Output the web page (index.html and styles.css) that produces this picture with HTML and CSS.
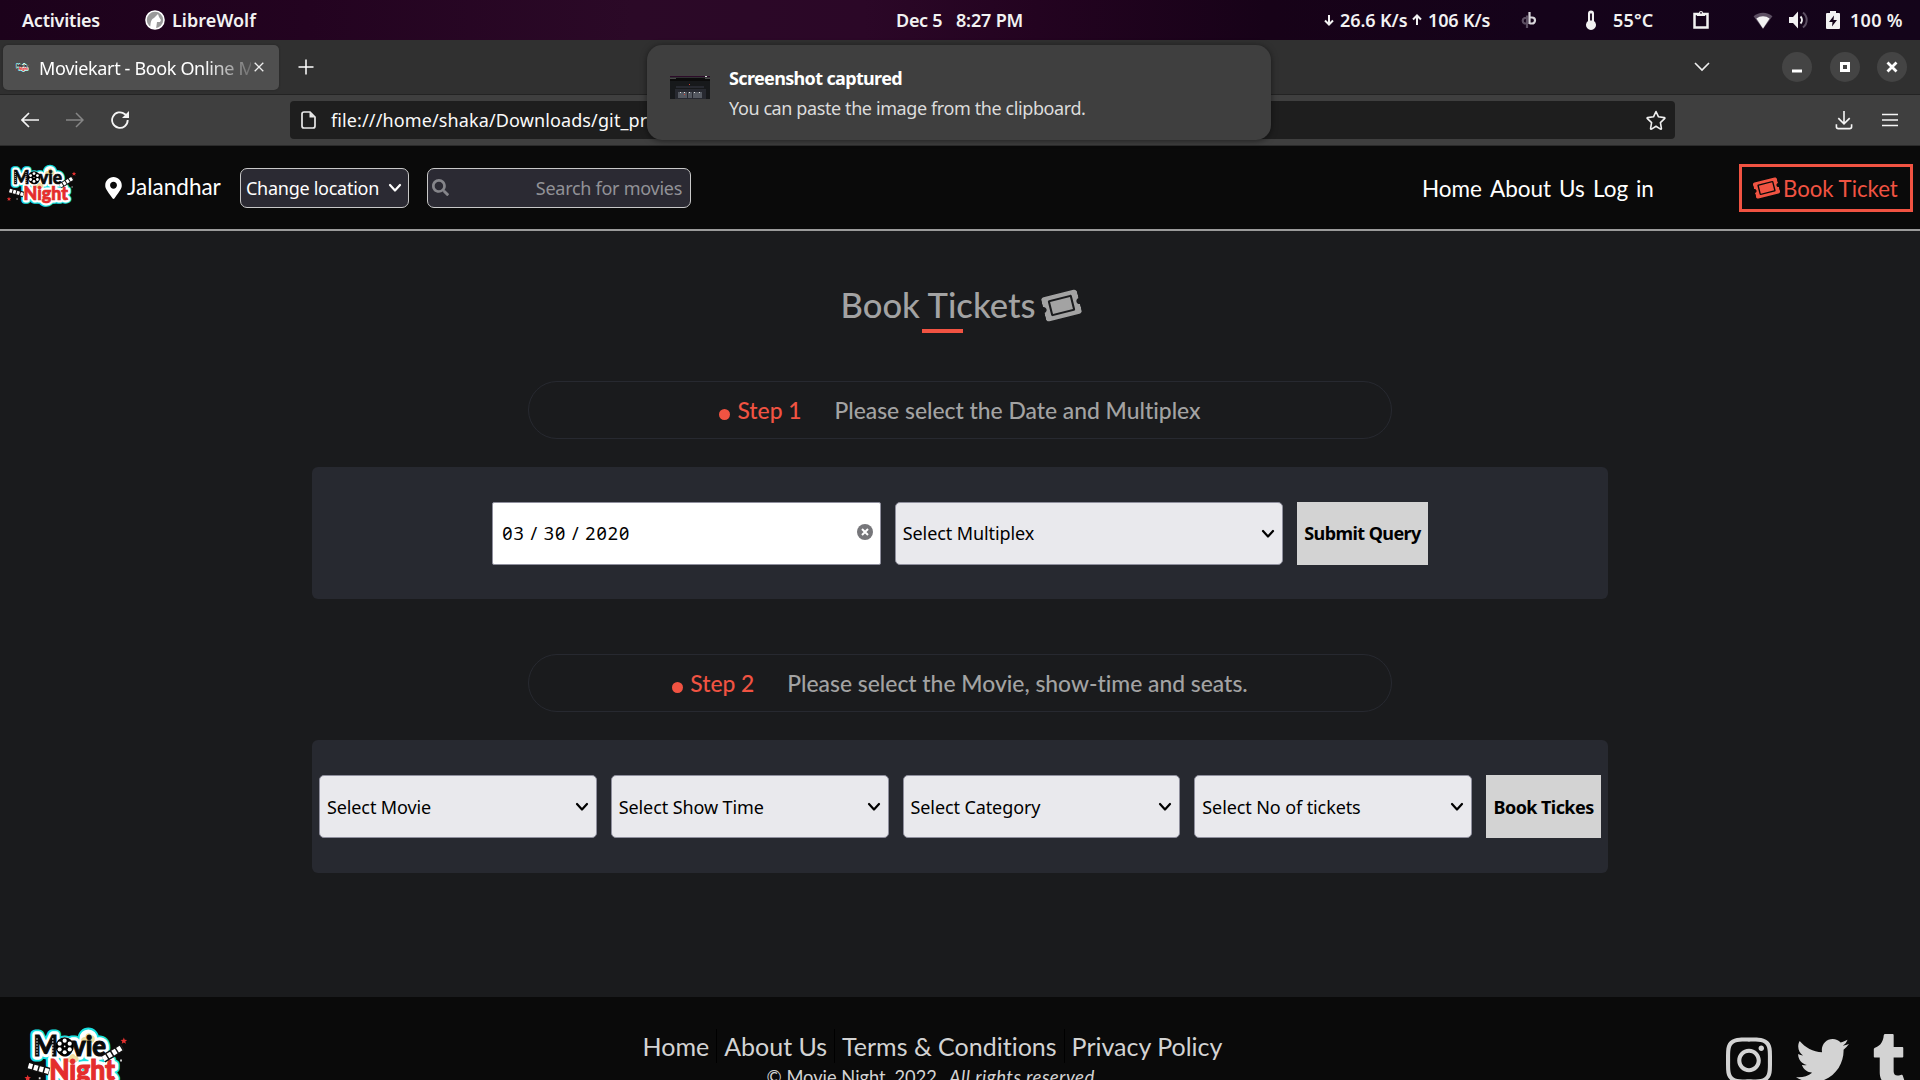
FILE: index.html
```html
<!DOCTYPE html>
<html lang="en">
<head>
<meta charset="utf-8">
<title>Moviekart - Book Online Movie Tickets</title>
<link rel="stylesheet" href="styles.css">
</head>
<body>
<svg class="defs" width="0" height="0">
  <symbol id="ticket" viewBox="0 0 576 512"><path d="M128 160h320v192H128V160zm400 96c0 26.51 21.49 48 48 48v96c0 26.51-21.49 48-48 48H48c-26.51 0-48-21.49-48-48v-96c26.51 0 48-21.49 48-48s-21.49-48-48-48v-96c0-26.51 21.49-48 48-48h480c26.51 0 48 21.49 48 48v96c-26.51 0-48 21.49-48 48zm-48-104c0-13.255-10.745-24-24-24H120c-13.255 0-24 10.745-24 24v208c0 13.255 10.745 24 24 24h336c13.255 0 24-10.745 24-24V152z"/></symbol>
  <symbol id="chevron" viewBox="0 0 14 10"><path d="M2 2l5 5.5L12 2" fill="none" stroke="currentColor" stroke-width="2.2" stroke-linecap="round" stroke-linejoin="round"/></symbol>
  <symbol id="logo" viewBox="6 162 72 48">
    <g class="logo-halo">
      <text x="13" y="182.7" textLength="49" lengthAdjust="spacingAndGlyphs">Movie</text>
      <text x="23.5" y="199" textLength="44.5" lengthAdjust="spacingAndGlyphs">Night</text>
      <circle cx="50" cy="171" r="3.5"/>
    </g>
    <g class="logo-edge">
      <text x="13" y="182.7" textLength="49" lengthAdjust="spacingAndGlyphs">Movie</text>
      <text x="23.5" y="199" textLength="44.5" lengthAdjust="spacingAndGlyphs">Night</text>
      <circle cx="50" cy="171" r="3.5"/>
    </g>
    <path d="M46 174c-2-2 0-4 2-4 0-3 4-3 4-1 3 0 3 4 1 5z" fill="#f0dda0"/>
    <path d="M35 187c-1-2 1-3 2-3 1-3 4-3 4-1 3 0 3 3 1 4z" fill="#f0dda0"/>
    <g class="logo-word">
      <text x="13" y="182.7" textLength="49" lengthAdjust="spacingAndGlyphs">Movie</text>
      <text class="logo-red" x="23.5" y="199" textLength="44.5" lengthAdjust="spacingAndGlyphs">Night</text>
    </g>
    <path d="M15.3 171v11M26 171v11" stroke="#fff" stroke-width=".7" stroke-dasharray="1 1"/>
    <circle cx="34" cy="176.5" r="6.2"/>
    <g fill="#fff"><circle cx="34" cy="172.6" r="1.4"/><circle cx="37.4" cy="174.6" r="1.4"/><circle cx="37.4" cy="178.5" r="1.4"/><circle cx="34" cy="180.4" r="1.4"/><circle cx="30.6" cy="178.5" r="1.4"/><circle cx="30.6" cy="174.6" r="1.4"/><circle cx="34" cy="176.5" r=".6"/></g>
    <path d="M60 185l13-8M9.500 189.500l14 4" stroke="#111" stroke-width="5.500"/>
    <path d="M60 185l13-8M9.500 189.500l14 4" stroke="#fff" stroke-width="3.600" stroke-dasharray="2.800 1"/>
    <path d="M74 170.500l.6 1.500 1.600.1-1.200 1 .4 1.600-1.400-.9-1.400.9.400-1.600-1.200-1 1.600-.1zM9 195.700l.6 1.500 1.600.1-1.200 1 .4 1.600-1.400-.9-1.400.9.400-1.600-1.200-1 1.600-.1z" fill="#e5302f"/>
    <path d="M16.500 198h1.200M71.500 186h1.200" stroke="#ddd" stroke-width="1.200"/>
  </symbol>
</svg>

<div class="topbar">
  <span class="activities">Activities</span>
  <svg class="wolf" viewBox="0 0 20 20"><circle cx="10" cy="10" r="9" fill="#999" stroke="#fff" stroke-width="1.600"/><path d="M5 18c1-4 0-8 4-10l4-4 1 3 2 3-1 2-3 0-1 7z" fill="#fff"/></svg>
  <span class="app">LibreWolf</span>
  <span class="date">Dec 5</span><span class="time">8:27 PM</span>
  <svg class="arr arr-down" viewBox="0 0 10 14"><path d="M5 2v9.500M1 7.500l4 4 4-4" fill="none" stroke="#f2f2f2" stroke-width="2"/></svg>
  <span class="down">26.6 K/s</span>
  <svg class="arr arr-up" viewBox="0 0 10 14"><path d="M5 12V3M1 6.500l4-4 4 4" fill="none" stroke="#f2f2f2" stroke-width="2"/></svg>
  <span class="up">106 K/s</span>
  <svg class="qb" viewBox="0 0 17 18"><g fill="none" stroke-width="2.200"><path d="M7 4.500v12.500M7 7H4.500a3 3 0 0 0 0 5.500H7" stroke="#5c4f62"/><path d="M9.500 1v12M9.500 6.500h2.500a3 3 0 0 1 0 6H9.500" stroke="#d8d5da"/></g></svg>
  <svg class="thermo" viewBox="0 0 12 20"><path d="M3 3.500a3 3 0 0 1 6 0V11a5 5 0 1 1-6 0z" fill="#f2f2f2"/><path d="M6 3.500v7" stroke="#14041a" stroke-width="1.800"/></svg>
  <span class="temp">55°C</span>
  <svg class="clip" viewBox="0 0 16 20"><path d="M1.500 4h13v13.500h-13z" fill="none" stroke="#f2f2f2" stroke-width="2.500"/><path d="M4 6V3h2a2 2 0 0 1 4 0h2v3z" fill="#f2f2f2"/><circle cx="8" cy="2.800" r=".9" fill="#14041a"/></svg>
  <svg class="wifi" viewBox="0 0 20 18"><path d="M0 4.500a15 15 0 0 1 20 0L10 18z" fill="#5c4f62"/><path d="M3 7a11 11 0 0 1 14 0L10 17.500z" fill="#f2f2f2"/></svg>
  <svg class="sound" viewBox="0 0 20 18"><path d="M0 6h4l5-5.500v17L4 12H0z" fill="#f2f2f2"/><path d="M11.500 5.500a5 5 0 0 1 0 7" fill="none" stroke="#f2f2f2" stroke-width="2"/><path d="M14 1.500a9.500 9.500 0 0 1 0 15" fill="none" stroke="#5c4f62" stroke-width="2"/></svg>
  <svg class="battery" viewBox="0 0 14 18"><path d="M1 2h3V0h6v2h3q1 0 1 1v14q0 1-1 1H1q-1 0-1-1V3q0-1 1-1z" fill="#f2f2f2"/><path d="M8 4.500L3 11h3.500L6 15.500 11 9H7.500z" fill="#14041a"/></svg>
  <span class="percent">100 %</span>
</div>

<div class="tabs">
  <div class="tab">
    <svg class="favicon" viewBox="6 162 72 48"><use href="#logo" x="6" y="162" width="72" height="48"/></svg>
    <span class="tab-title">Moviekart - Book Online M</span>
    <svg class="tab-close" viewBox="0 0 10 10"><path d="M.7.7l8.600 8.600M9.300.7L.7 9.300" stroke="#eee" stroke-width="1.300"/></svg>
  </div>
  <svg class="plus" viewBox="0 0 16 16"><path d="M8 .5v15M.5 8h15" stroke="#fff" stroke-width="1.500"/></svg>
  <svg class="all-tabs" viewBox="0 0 16 10"><path d="M1 1l7 7 7-7" fill="none" stroke="#f0f0f0" stroke-width="1.600"/></svg>
  <div class="win"><svg viewBox="0 0 30 30"><path d="M10 19h10" stroke="#fff" stroke-width="3"/></svg></div>
  <div class="win"><svg viewBox="0 0 30 30"><path d="M11.500 11.500h7v7h-7z" fill="none" stroke="#fff" stroke-width="3"/></svg></div>
  <div class="win"><svg viewBox="0 0 30 30"><path d="M10.500 10.500l9 9M19.500 10.500l-9 9" stroke="#fff" stroke-width="2.800"/></svg></div>
</div>

<div class="toolbar">
  <svg class="nav-back" viewBox="0 0 18 16"><path d="M18 8H1.500M8 1L1 8l7 7" fill="none" stroke="#f5f5f5" stroke-width="1.700"/></svg>
  <svg class="nav-fwd" viewBox="0 0 18 16"><path d="M0 8h16.500M10 1l7 7-7 7" fill="none" stroke="#868686" stroke-width="1.500"/></svg>
  <svg class="reload" viewBox="0 0 18 18"><path d="M16.700 9A7.800 7.800 0 1 1 14 3.200l1.500 1.500" fill="none" stroke="#f5f5f5" stroke-width="1.800"/><path d="M18 0v7h-7z" fill="#f5f5f5"/></svg>
  <div class="url">
    <svg class="doc" viewBox="0 0 15 18"><path d="M3 1h6l5 5v9q0 2-2 2H3q-2 0-2-2V3q0-2 2-2z" fill="none" stroke="#e8e8e8" stroke-width="1.700"/><path d="M8.500 1l5.500 5.500H8.500z" fill="#e8e8e8"/></svg>
    <span class="address">file:///home/shaka/Downloads/git_pr</span>
    <svg class="star" viewBox="0 0 20 20"><path d="M10 1.500l2.500 5.300 5.800.8c.6.100.8.700.3 1.100l-4.200 4 1 5.700c.1.600-.4.900-.9.700L10 16.300l-4.500 2.800c-.5.200-1-.1-.9-.7l1-5.700-4.200-4c-.5-.4-.3-1 .3-1.100l5.800-.8z" fill="none" stroke="#f0f0f0" stroke-width="1.600" stroke-linejoin="round"/></svg>
  </div>
  <svg class="download" viewBox="0 0 18 20"><path d="M9 0v13M3 7.500l6 6 6-6M1 14v2.500q0 2 2 2h12q2 0 2-2V14" fill="none" stroke="#f5f5f5" stroke-width="1.700"/></svg>
  <svg class="menu" viewBox="0 0 16 14"><path d="M0 1.500h16M0 7h16M0 12.500h16" stroke="#f5f5f5" stroke-width="1.500"/></svg>
</div>

<div class="toast">
  <svg class="thumb" viewBox="0 0 40 23"><path fill="#17191b" d="M0 0h40v23H0z"/><path fill="#2d0b29" d="M0 0h40v1H0z"/><path fill="#4a4a4a" d="M0 1.500h40v1.500H0z"/><path fill="#0c0c0c" d="M6 2h29v1H6zM0 3h40v2H0z"/><path fill="#272930" d="M6 10h28v2H6zM5 13h31v10H5z"/><path fill="#555961" d="M8 16h9v6H8zM18 16h4v6h-4zM23 16h9v6h-9z"/><path fill="#ddd" d="M10 16h1v1h-1zM14 16h1v1h-1zM19 16h1v1h-1zM24 16h1v1h-1zM29 16h1v1h-1zM35 0h2v1h-2z"/><path fill="#d24033" d="M19 8h1v1h-1zM14 18h1v1h-1z"/></svg>
  <div>
    <div class="toast-title">Screenshot captured</div>
    <div class="toast-body">You can paste the image from the clipboard.</div>
  </div>
</div>

<header>
  <svg class="logo"><use href="#logo"/></svg>
  <svg class="pin" viewBox="0 0 384 512"><path fill="#fff" d="M172.268 501.67C26.97 291.031 0 269.413 0 192 0 85.961 85.961 0 192 0s192 85.961 192 192c0 77.413-26.97 99.031-172.268 309.67-9.535 13.774-29.93 13.773-39.464 0zM192 272c44.183 0 80-35.817 80-80s-35.817-80-80-80-80 35.817-80 80 35.817 80 80 80z"/></svg>
  <span class="city">Jalandhar</span>
  <div class="location"><span>Change location</span><svg><use href="#chevron"/></svg></div>
  <div class="search"><svg viewBox="0 0 512 512"><path fill="#85858a" d="M505 442.700L405.300 343c-4.500-4.500-10.600-7-17-7H372c27.600-35.300 44-79.700 44-128C416 93.100 322.900 0 208 0S0 93.100 0 208s93.100 208 208 208c48.300 0 92.700-16.400 128-44v16.300c0 6.400 2.500 12.500 7 17l99.700 99.700c9.400 9.400 24.600 9.400 33.900 0l28.300-28.300c9.400-9.400 9.400-24.600.1-34zM208 336c-70.700 0-128-57.200-128-128 0-70.700 57.200-128 128-128 70.700 0 128 57.200 128 128 0 70.700-57.200 128-128 128z"/></svg><span>Search for movies</span></div>
  <nav><span class="n1">Home</span><span class="n2">About</span><span class="n3">Us</span><span class="n4">Log in</span></nav>
  <div class="book"><svg><use href="#ticket"/></svg><span>Book Ticket</span></div>
</header>

<main>
  <h1><span>Book Tickets</span><svg><use href="#ticket"/></svg></h1>
  <div class="underline"></div>
  <div class="step"><i></i><b>Step 1</b><span>Please select the Date and Multiplex</span></div>
  <section class="panel">
    <div class="field date-field wide"><span>03 / 30 / 2020</span><svg class="clear" viewBox="0 0 16 16"><circle cx="8" cy="8" r="8" fill="#76767a"/><path d="M5 5l6 6M11 5l-6 6" stroke="#fff" stroke-width="2"/></svg></div>
    <div class="field wide"><span>Select Multiplex</span><svg class="chev"><use href="#chevron"/></svg></div>
    <div class="submit query">Submit Query</div>
  </section>
  <div class="step second"><i></i><b>Step 2</b><span>Please select the Movie, show-time and seats.</span></div>
  <section class="panel tall">
    <div class="field"><span>Select Movie</span><svg class="chev"><use href="#chevron"/></svg></div>
    <div class="field"><span>Select Show Time</span><svg class="chev"><use href="#chevron"/></svg></div>
    <div class="field"><span>Select Category</span><svg class="chev"><use href="#chevron"/></svg></div>
    <div class="field"><span>Select No of tickets</span><svg class="chev"><use href="#chevron"/></svg></div>
    <div class="submit tickets">Book Tickes</div>
  </section>
</main>

<footer>
  <svg class="foot-logo"><use href="#logo"/></svg>
  <div class="foot-mid">
    <div class="links"><span>Home</span><span>About Us</span><span>Terms &amp; Conditions</span><span>Privacy Policy</span></div>
    <div class="copy"><span>© Movie Night, 2022</span><em>All rights reserved.</em></div>
  </div>
  <div class="social">
    <svg width="46" height="53" viewBox="0 0 448 512"><path d="M224.100 141c-63.600 0-114.900 51.300-114.900 114.900s51.300 114.900 114.900 114.900S339 319.500 339 255.900 287.700 141 224.100 141zm0 189.600c-41.100 0-74.700-33.500-74.700-74.700s33.500-74.700 74.700-74.700 74.700 33.500 74.700 74.700-33.600 74.700-74.700 74.700zm146.400-194.300c0 14.900-12 26.800-26.800 26.800-14.900 0-26.800-12-26.800-26.800s12-26.800 26.800-26.800 26.800 12 26.800 26.800zm76.100 27.200c-1.700-35.900-9.900-67.700-36.200-93.900-26.200-26.200-58-34.400-93.900-36.200-37-2.100-147.900-2.100-184.900 0-35.800 1.700-67.600 9.900-93.900 36.100s-34.400 58-36.200 93.900c-2.100 37-2.100 147.900 0 184.900 1.700 35.900 9.900 67.700 36.200 93.900s58 34.400 93.900 36.200c37 2.100 147.900 2.100 184.900 0 35.900-1.700 67.700-9.900 93.900-36.200 26.200-26.200 34.400-58 36.200-93.900 2.100-37 2.100-147.800 0-184.800zM398.800 388c-7.800 19.600-22.900 34.700-42.600 42.600-29.500 11.700-99.500 9-132.100 9s-102.700 2.600-132.100-9c-19.600-7.800-34.700-22.900-42.600-42.600-11.700-29.500-9-99.500-9-132.100s-2.600-102.700 9-132.100c7.800-19.600 22.900-34.700 42.600-42.600 29.500-11.700 99.500-9 132.100-9s102.700-2.600 132.100 9c19.600 7.800 34.700 22.900 42.600 42.600 11.700 29.500 9 99.500 9 132.100s2.700 102.700-9 132.100z"/></svg>
    <svg width="53" height="53" viewBox="0 0 512 512"><path d="M459.370 151.716c.325 4.548.325 9.097.325 13.645 0 138.720-105.583 298.558-298.558 298.558-59.452 0-114.680-17.219-161.137-47.106 8.447.974 16.568 1.299 25.340 1.299 49.055 0 94.213-16.568 130.274-44.832-46.132-.975-84.792-31.188-98.112-72.772 6.498.974 12.995 1.624 19.818 1.624 9.421 0 18.843-1.300 27.614-3.573-48.081-9.747-84.143-51.980-84.143-102.985v-1.299c13.969 7.797 30.214 12.670 47.431 13.319-28.264-18.843-46.781-51.005-46.781-87.391 0-19.492 5.197-37.360 14.294-52.954 51.655 63.675 129.300 105.258 216.365 109.807-1.624-7.797-2.599-15.918-2.599-24.040 0-57.828 46.782-104.934 104.934-104.934 30.213 0 57.502 12.670 76.670 33.137 23.715-4.548 46.456-13.320 66.599-25.340-7.798 24.366-24.366 44.833-46.132 57.827 21.117-2.273 41.584-8.122 60.426-16.243-14.292 20.791-32.161 39.308-52.628 54.253z"/></svg>
    <svg width="33" height="53" viewBox="0 0 320 512"><path d="M309.800 480.300c-13.600 14.500-50 31.700-97.400 31.700-120.800 0-147-88.800-147-140.600v-144H17.900c-5.500 0-10-4.500-10-10v-68c0-7.200 4.500-13.600 11.300-16 62-21.800 81.500-76 84.300-117.100.8-11 6.500-16.300 16.100-16.300h70.900c5.500 0 10 4.500 10 10v115.200h83c5.500 0 10 4.400 10 9.900v81.700c0 5.500-4.500 10-10 10h-83.400V360c0 34.200 23.700 53.600 68 35.800 4.800-1.900 9-3.200 12.700-2.200 3.500.9 5.800 3.400 7.400 7.900l22 64.300c1.800 5 3.300 10.600-.4 14.500z"/></svg>
  </div>
</footer>
</body>
</html>
```
FILE: styles.css
```css
* { box-sizing: border-box; }
html, body { margin: 0; height: 1080px; overflow: hidden; }
body {
  background: #1a1b1d;
  font: 18px/24px "Noto Sans", sans-serif;
  font-variant-ligatures: none;
  color: #fff;
  display: flex;
  flex-direction: column;
}
svg { flex: none; display: block; }
span, b, em { white-space: nowrap; }
.defs { display: none; }

/* desktop bar */
.topbar {
  height: 40px;
  flex: none;
  display: flex;
  align-items: center;
  background: linear-gradient(90deg, #1c021b 0, #230320 16%, #2b0927 33%, #2b0727 45%, #230320 54%, #170218 66%, #15031a 80%, #14041a 100%);
  font-weight: 600;
  color: #f2f2f2;
}
.topbar span { flex: none; }
.activities { width: 123px; padding-left: 22px; letter-spacing: -.23px; }
.wolf { width: 20px; height: 20px; margin-left: 22px; }
.app { width: 731px; padding-left: 7px; }
.date { width: 60px; letter-spacing: -.3px; }
.time { width: 361px; letter-spacing: -.18px; }
.arr { width: 10px; height: 14px; }
.arr-down { margin-left: 7px; }
.down { width: 77px; padding-left: 6px; letter-spacing: -.1px; }
.arr-up { margin-left: 1px; }
.up { width: 98px; padding-left: 6px; letter-spacing: -.15px; }
.qb { width: 17px; height: 18px; }
.thermo { width: 12px; height: 20px; margin-left: 48px; }
.temp { width: 96px; padding-left: 16px; letter-spacing: .15px; }
.clip { width: 16px; height: 20px; }
.wifi { width: 20px; height: 17px; margin-left: 44px; }
.sound { width: 20px; height: 18px; margin-left: 16px; }
.battery { width: 14px; height: 18px; margin-left: 17px; }
.percent { margin-left: 10px; letter-spacing: .3px; }

/* browser chrome */
.tabs {
  height: 55px;
  flex: none;
  display: flex;
  align-items: center;
  background: #303030;
  border-bottom: 1px solid #232323;
  padding-left: 3px;
}
.tab {
  width: 276px;
  flex: none;
  height: 45px;
  background: #4f4f4f;
  border-radius: 5px;
  display: flex;
  align-items: center;
  padding-left: 12px;
  box-shadow: 0 0 2px #222;
}
.favicon { width: 15px; height: 11px; }
.tab-title {
  width: 212px;
  margin-left: 9px;
  padding-top: 1px;
  letter-spacing: -.35px;
  overflow: hidden;
  -webkit-mask-image: linear-gradient(90deg, #000 165px, transparent 222px);
  mask-image: linear-gradient(90deg, #000 165px, transparent 222px);
}
.tab-close { width: 10px; height: 10px; margin-left: 3px; }
.plus { width: 16px; height: 16px; margin-left: 19px; }
.all-tabs { width: 16px; height: 10px; margin: 0 72px 0 1380px; }
.win { flex: none; width: 30px; height: 30px; border-radius: 50%; background: #444; margin-right: 17.5px; }
.win:last-child { margin-right: 0; }
.win svg { width: 30px; height: 30px; }
.toolbar {
  height: 51px;
  flex: none;
  display: flex;
  align-items: center;
  background: #3f3f3f;
  border-bottom: 1px solid #2b2b2b;
}
.nav-back { width: 18px; height: 16px; margin-left: 21px; }
.nav-fwd { width: 18px; height: 16px; margin-left: 27px; }
.reload { width: 18px; height: 18px; margin-left: 27px; }
.url {
  width: 1385px;
  height: 38px;
  margin-left: 161px;
  background: #1e1e1e;
  border-radius: 4px;
  display: flex;
  align-items: center;
  padding-left: 11px;
  color: #fafafa;
}
.doc { width: 15px; height: 18px; margin-right: 15px; }
.address { width: 1315px; letter-spacing: .12px; }
.star { width: 20px; height: 20px; }
.download { width: 18px; height: 19px; margin-left: 160px; }
.menu { width: 16px; height: 14px; margin-left: 29px; }

/* notification over the browser chrome */
.toast {
  position: absolute;
  left: 647px;
  top: 45px;
  width: 624px;
  height: 95px;
  border-radius: 15px;
  background: #3f3f3f;
  box-shadow: 0 1px 6px rgba(0, 0, 0, .5);
  display: flex;
  align-items: center;
  padding-left: 23px;
}
.thumb { width: 40px; height: 23px; margin: -11px 19px 0 0; }
.toast-title { font-weight: 700; letter-spacing: -.65px; line-height: 30px; }
.toast-body { letter-spacing: -.4px; line-height: 30px; color: #dcdcdc; }

/* site header */
header {
  height: 85px;
  flex: none;
  display: flex;
  align-items: center;
  background: #0a0a0a;
  border-bottom: 2px solid #9b9b9b;
  font-family: Lato, sans-serif;
  font-size: 22.5px;
}
.logo { width: 72px; height: 48px; margin: -2px 0 0 6px; }
.logo-halo, .logo-edge, .logo-word, #logo { font-family: Lato, sans-serif; font-weight: 900; font-size: 19px; }
.logo-halo { fill: #19e0e0; stroke: #19e0e0; stroke-width: 7.5px; stroke-linejoin: round; }
.logo-edge { fill: #fff; stroke: #fff; stroke-width: 5px; stroke-linejoin: round; }
.logo-word { fill: #0a0a0a; stroke: #0a0a0a; stroke-width: .7px; }
.logo-red { fill: #e42d2d; stroke: #e42d2d; }
.pin { width: 17px; height: 22px; margin-left: 27px; }
.city { width: 113px; margin: -1px 0 0 5px; }
.location, .search {
  height: 40px;
  border: 1.5px solid #c8c8c8;
  border-radius: 7px;
  background: #2b2a33;
  display: flex;
  align-items: center;
  font-family: "Noto Sans", sans-serif;
  font-size: 18px;
  letter-spacing: -.27px;
}
.location { width: 169px; padding-left: 5px; }
.location span { width: 142px; }
.location svg { width: 14px; height: 10px; }
.search { width: 264px; margin-left: 18px; padding: 0 8px 0 4px; justify-content: space-between; color: #929297; }
.search svg { width: 17px; height: 17px; }
nav { display: flex; margin: 3px 0 0 731px; width: 317px; }
.n1 { width: 68px; }
.n2 { width: 69px; }
.n3 { width: 34px; }
.n4 { word-spacing: 2px; }
.book {
  width: 174px;
  height: 48px;
  border: 3px solid #f15342;
  color: #f15342;
  display: flex;
  align-items: center;
  padding-left: 12px;
}
.book span { margin: 2px 0 0 4px; font-size: 22.2px; }
.book svg { width: 25px; height: 22px; transform: rotate(-14deg); fill: currentColor; }

/* booking steps */
main { display: flex; flex-direction: column; align-items: center; }
h1 {
  margin: 54px 0 0 1px;
  height: 40px;
  display: flex;
  align-items: center;
  font: 500 34.6px/40px Lato, sans-serif;
  font-variant-ligatures: none;
  color: #a3a3a3;
}
h1 svg { width: 37px; height: 33px; margin-left: 8px; fill: currentColor; transform: rotate(-14deg); }
.underline { width: 41px; height: 4px; background: #f15342; margin: 4px 0 48px -35px; }
.step {
  width: 864px;
  height: 58px;
  border: 1.5px solid #272930;
  border-radius: 29px;
  display: flex;
  align-items: center;
  justify-content: center;
  font: 500 22.85px/30px Lato, sans-serif;
  font-variant-ligatures: none;
  color: #a3a3a3;
}
.step i { width: 11px; height: 11px; border-radius: 50%; background: #f15342; margin: 8px 7px 0 0; }
.step b { width: 64px; margin-right: 33px; font-weight: 500; color: #f15342; }
.second { margin-top: 55px; }
.panel {
  width: 1296px;
  height: 132px;
  margin-top: 28px;
  background: #272930;
  border-radius: 6px;
  display: flex;
  align-items: center;
  justify-content: center;
  gap: 14px;
}
.tall { height: 133px; }
.field {
  width: 277.8px;
  height: 63px;
  background: #e9e9ed;
  border: 1.5px solid #8f8f9d;
  border-radius: 5px;
  color: #000;
  display: flex;
  align-items: center;
  justify-content: space-between;
  padding: 0 7px;
  letter-spacing: -.1px;
}
.wide { width: 388.5px; }
.date-field { background: #fff; border-radius: 2px; padding: 0 7px 0 9px; letter-spacing: .97px; font-feature-settings: "zero"; }
.clear { width: 16px; height: 16px; margin-top: -3px; }
.chev { width: 14px; height: 10px; margin-top: 1px; }
.submit {
  height: 63px;
  background: #d3d3d3;
  color: #000;
  display: flex;
  align-items: center;
  justify-content: center;
  font-weight: 700;
  letter-spacing: -.57px;
  white-space: nowrap;
}
.query { width: 130.5px; }
.tickets { width: 115px; }

/* site footer */
footer {
  height: 83px;
  flex: none;
  margin-top: 124px;
  background: #0a0a0a;
  display: flex;
  align-items: flex-start;
  overflow: hidden;
  font-family: Lato, sans-serif;
  color: #d3d3d3;
}
.foot-logo { width: 107px; height: 71px; margin: 28px 0 0 22.5px; }
.foot-mid { width: 1143px; margin-top: 32px; padding-left: 513px; flex: none; }
.links { display: flex; font-size: 25px; line-height: 34px; margin-left: -7px; }
.links span { padding: 0 7px; border-right: 1.5px solid #000; }
.links span:last-child { border: 0; }
.copy { display: flex; margin: 3px 0 0 124px; font-size: 18.3px; line-height: 22px; }
.copy em { margin-left: 12px; font-size: 18.6px; letter-spacing: .45px; }
.social { display: flex; margin: 37px 0 0 453.5px; gap: 24px; }
.social svg { fill: #d3d3d3; }
```
